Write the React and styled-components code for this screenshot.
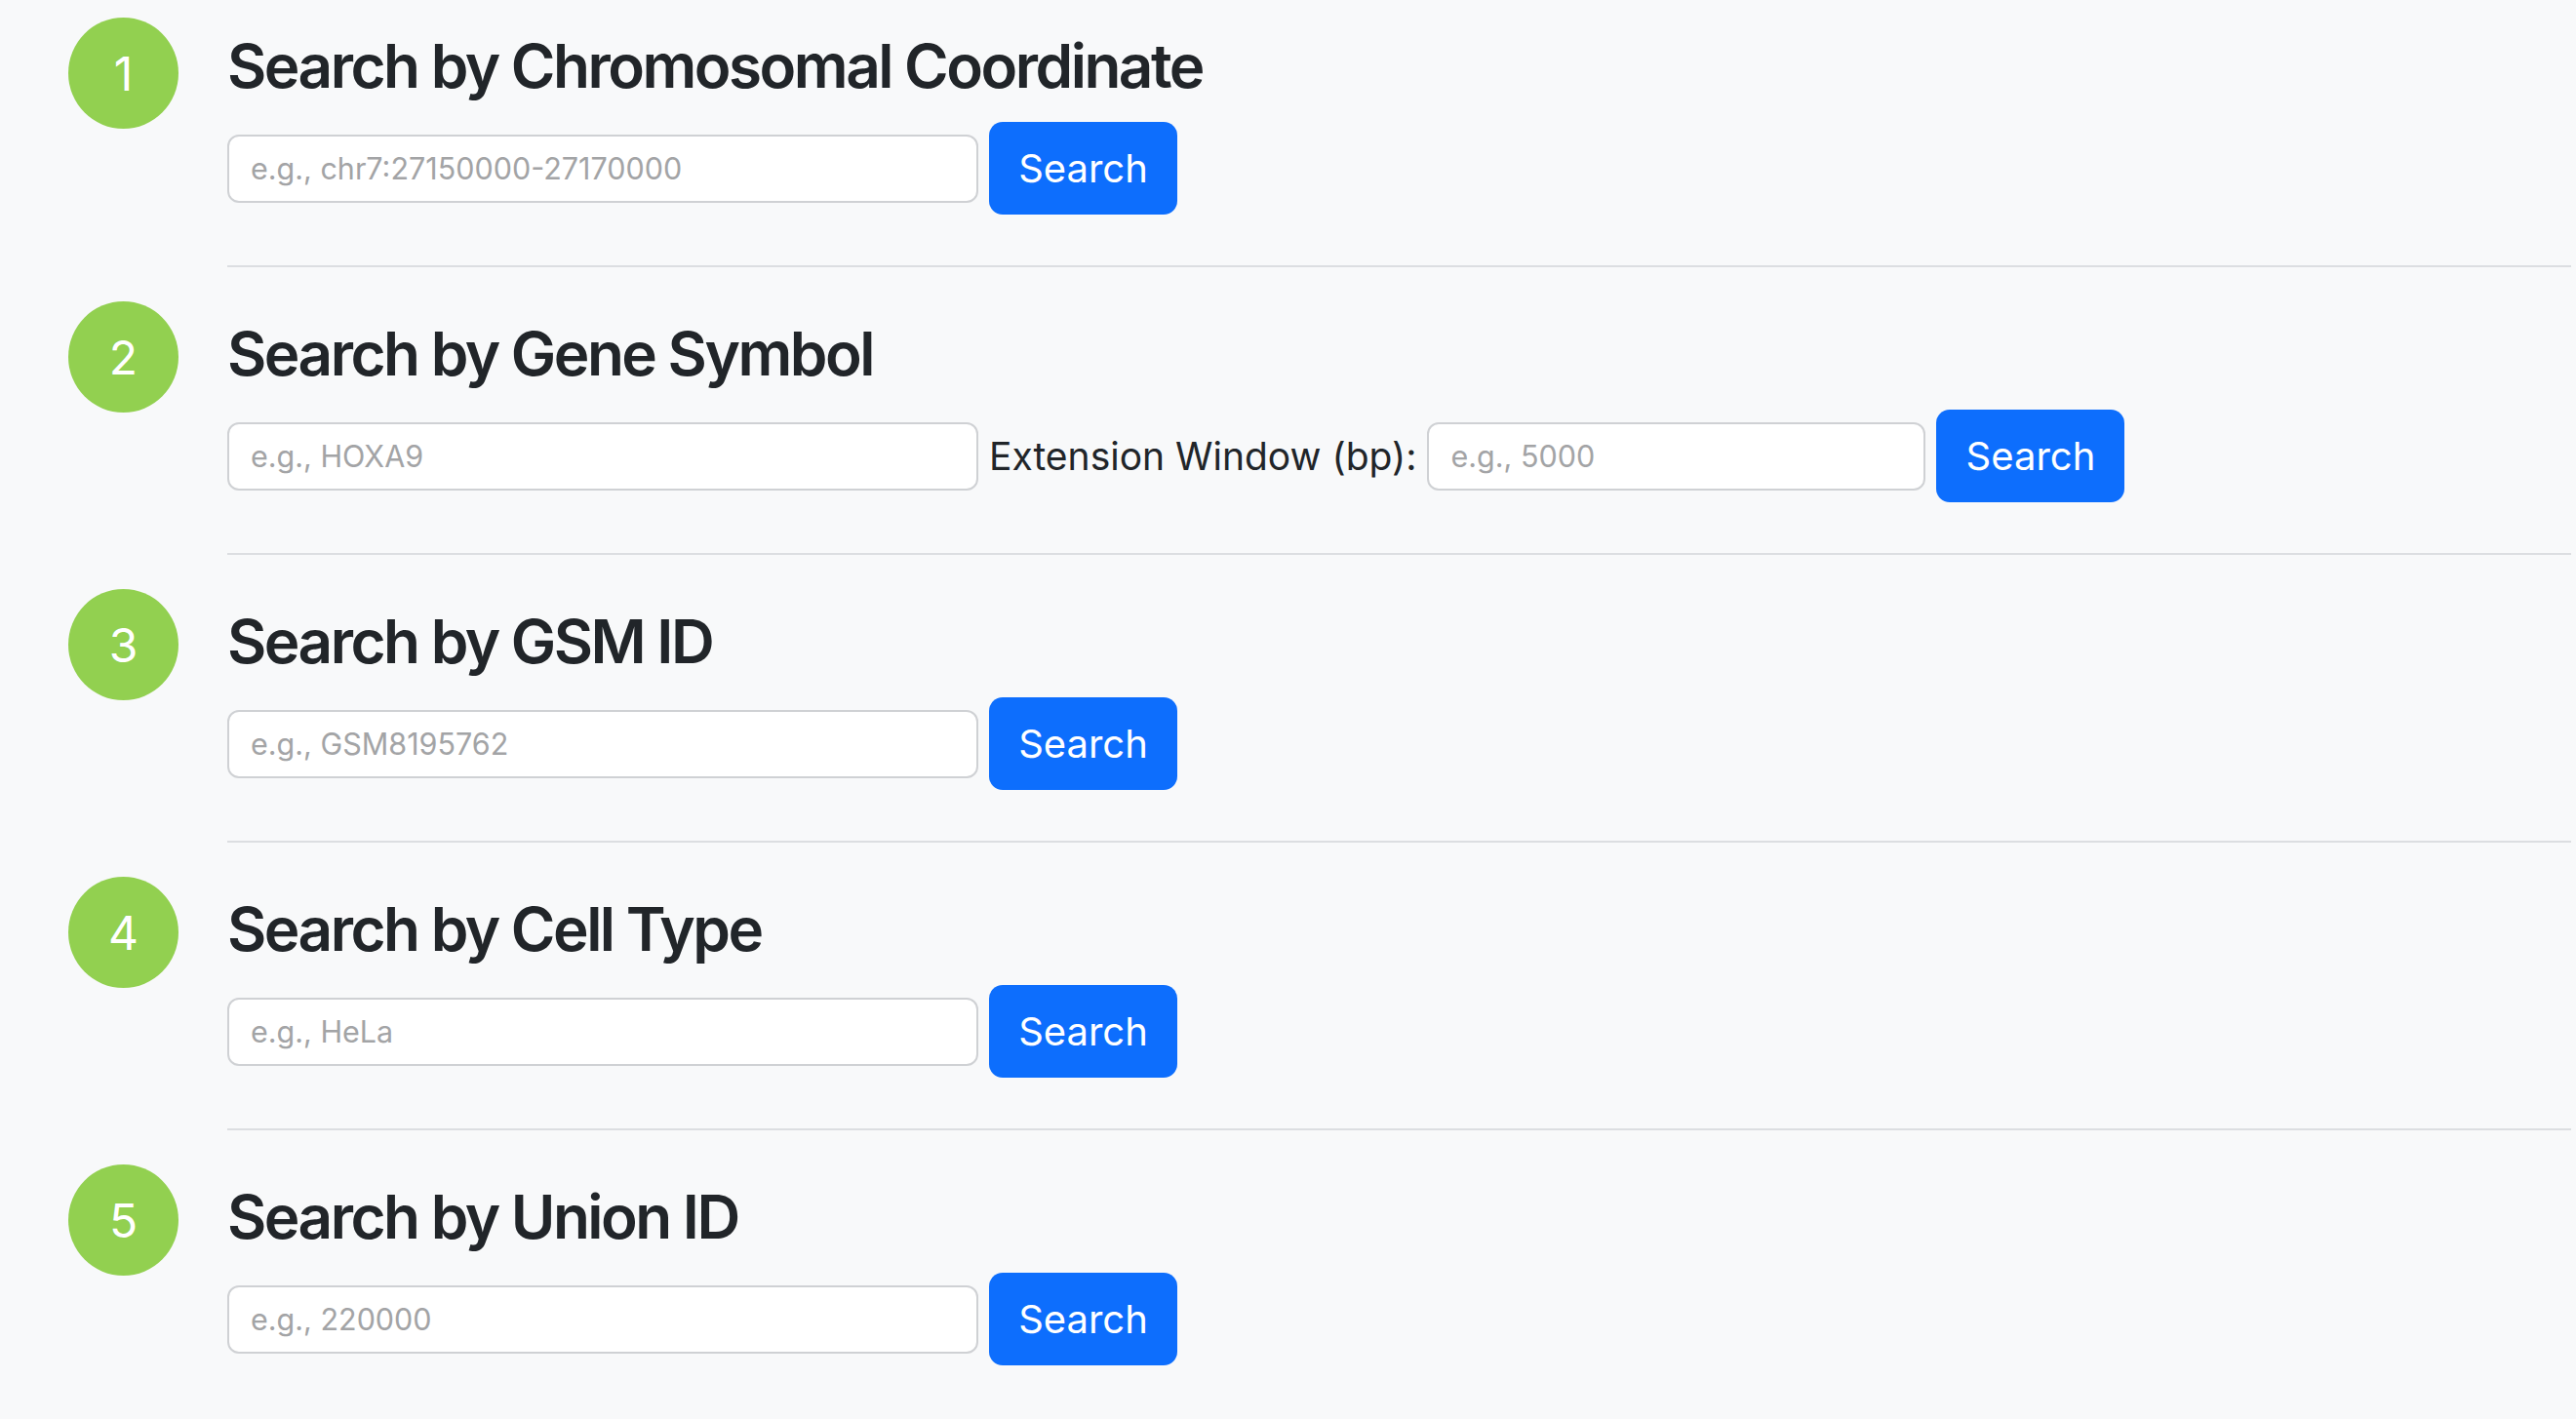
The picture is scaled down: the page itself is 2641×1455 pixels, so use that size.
import React from "react";
import styled, { createGlobalStyle } from "styled-components";

const GlobalStyle = createGlobalStyle`
  html, body {
    margin: 0;
    padding: 0;
    background: #f8f9fa;
    font-family: Inter, "Liberation Sans", Arial, sans-serif;
    color: #212529;
  }
`;

const searches = [
  { id: 1, title: "Search by Chromosomal Coordinate", placeholder: "e.g., chr7:27150000-27170000" },
  { id: 2, title: "Search by Gene Symbol", placeholder: "e.g., HOXA9", extension: true },
  { id: 3, title: "Search by GSM ID", placeholder: "e.g., GSM8195762" },
  { id: 4, title: "Search by Cell Type", placeholder: "e.g., HeLa" },
  { id: 5, title: "Search by Union ID", placeholder: "e.g., 220000" },
];

function App() {
  return (
    <Page>
      <GlobalStyle />
      {searches.map((s, i) => (
        <Section key={s.id}>
          <StepCircle $first={i === 0}>{s.id}</StepCircle>
          <Content $first={i === 0}>
            <Title>{s.title}</Title>
            <FormRow>
              <Input placeholder={s.placeholder} />
              {s.extension && (
                <>
                  <Label>Extension Window (bp):</Label>
                  <Input $small placeholder="e.g., 5000" />
                </>
              )}
              <Button>Search</Button>
            </FormRow>
            {i < searches.length - 1 && <Divider />}
          </Content>
        </Section>
      ))}
    </Page>
  );
}

const Page = styled.div`
  padding: 0 5px 0 70px;
  min-height: 1455px;
  box-sizing: border-box;
`;

const Section = styled.section`
  display: flex;
  align-items: flex-start;
  gap: 50px;
`;

const StepCircle = styled.div`
  flex: none;
  width: 113px;
  height: 114px;
  margin-top: ${(p) => (p.$first ? "18px" : "35px")};
  border-radius: 50%;
  background: #92d050;
  color: #fff;
  font-size: 48px;
  display: flex;
  align-items: center;
  justify-content: center;
`;

const Content = styled.div`
  flex: 1;
  padding-top: ${(p) => (p.$first ? "31px" : "52px")};
`;

const Title = styled.h2`
  margin: 0 0 20px;
  font-size: 62px;
  font-weight: 600;
  line-height: 74px;
  letter-spacing: -2.5px;
`;

const FormRow = styled.div`
  display: flex;
  align-items: center;
  gap: 11px;
  height: 95px;
`;

const Input = styled.input`
  box-sizing: border-box;
  width: ${(p) => (p.$small ? "511px" : "770px")};
  height: 70px;
  padding: 0 22px;
  border: 2px solid #cfd1d4;
  border-radius: 12px;
  background: #fff;
  font-family: inherit;
  font-size: 30.5px;
  color: #212529;
  outline: none;
  &::placeholder {
    color: #a3a4a6;
  }
`;

const Label = styled.span`
  font-size: 39px;
  color: #212529;
  white-space: nowrap;
`;

const Button = styled.button`
  box-sizing: border-box;
  width: 193px;
  height: 95px;
  border: none;
  border-radius: 14px;
  background: #0d6efd;
  color: #fff;
  font-family: inherit;
  font-size: 40px;
  cursor: pointer;
`;

const Divider = styled.hr`
  margin: 52px 0 0;
  border: none;
  border-top: 2px solid #dcdee1;
`;

export default App;
